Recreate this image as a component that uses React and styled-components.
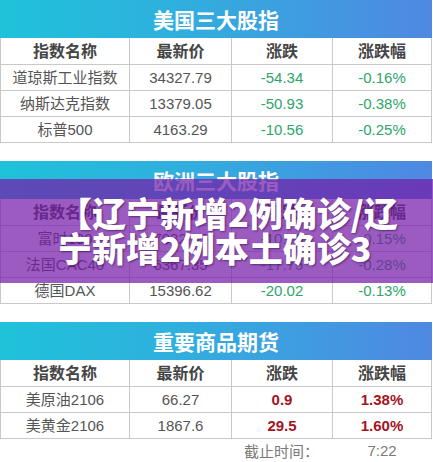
import React from 'react';
import styled, { createGlobalStyle } from "styled-components";

const GlobalStyle = createGlobalStyle`
  html, body {
    margin: 0;
    padding: 0;
    background: #fff;
  }
  body {
    font-family: "Liberation Sans", "Noto Sans CJK SC", sans-serif;
  }
`;

const tables = [
  {
    title: '美国三大股指',
    rows: [
      ['道琼斯工业指数', '34327.79', '-54.34', '-0.16%'],
      ['纳斯达克指数', '13379.05', '-50.93', '-0.38%'],
      ['标普500', '4163.29', '-10.56', '-0.25%'],
    ],
  },
  {
    title: '欧洲三大股指',
    rows: [
      ['富时100', '7032.85', '-10.76', '-0.15%'],
      ['法国CAC40', '6367.35', '-17.75', '-0.28%'],
      ['德国DAX', '15396.62', '-20.02', '-0.13%'],
    ],
  },
  {
    title: '重要商品期货',
    rows: [
      ['美原油2106', '66.27', '0.9', '1.38%'],
      ['美黄金2106', '1867.6', '29.5', '1.60%'],
    ],
  },
];

function QuoteTable({ title, rows, footer }) {
  return (
    <Card>
      <Banner>{title}</Banner>
      <Table>
        <colgroup>
          <col style={{ width: 129 }} />
          <col style={{ width: 102 }} />
          <col style={{ width: 101 }} />
          <col />
        </colgroup>
        <thead>
          <tr>
            <HeadCell>指数名称</HeadCell>
            <HeadCell>最新价</HeadCell>
            <HeadCell>涨跌</HeadCell>
            <HeadCell>涨跌幅</HeadCell>
          </tr>
        </thead>
        <tbody>
          {rows.map((r) => {
            const up = !r[2].startsWith('-');
            return (
              <tr key={r[0]}>
                <Cell>{r[0]}</Cell>
                <Cell>{r[1]}</Cell>
                <Cell $tone={up ? 'up' : 'down'}>{r[2]}</Cell>
                <Cell $tone={up ? 'up' : 'down'}>{r[3]}</Cell>
              </tr>
            );
          })}
        </tbody>
      </Table>
      {footer && (
        <Footer>
          <span />
          <span />
          <FootText>截止时间：</FootText>
          <FootText>7:22</FootText>
        </Footer>
      )}
    </Card>
  );
}

export default function App() {
  return (
    <Page>
      <GlobalStyle />
      <QuoteTable {...tables[0]} />
      <QuoteTable {...tables[1]} />
      <QuoteTable {...tables[2]} footer />
      <Overlay>
        <Line>【辽宁新增2例确诊/辽</Line>
        <Line>宁新增2例本土确诊3</Line>
      </Overlay>
    </Page>
  );
}

const Page = styled.div`
  position: relative;
  width: 433px;
  height: 462px;
  overflow: hidden;
  display: flex;
  flex-direction: column;
  gap: 18px;
  background: #fff;
`;

const Card = styled.div`
  width: 432px;
`;

const Banner = styled.div`
  height: 38px;
  display: flex;
  align-items: center;
  justify-content: center;
  background: linear-gradient(90deg, #1fc2da 0%, #2fb0de 40%, #4f88e2 100%);
  color: #fff;
  font-family: "Noto Sans CJK SC", sans-serif;
  font-weight: 700;
  font-size: 21px;
`;

const Table = styled.table`
  width: 432px;
  border-collapse: collapse;
  table-layout: fixed;
`;

const HeadCell = styled.th`
  height: 26px;
  padding: 0;
  border: 1px solid #c9c9c9;
  border-top: none;
  color: #454545;
  font-size: 16px;
  font-weight: 700;
  text-align: center;
  line-height: 25px;
`;

const Cell = styled.td`
  height: 25px;
  padding: 0;
  border: 1px solid #c9c9c9;
  text-align: center;
  font-size: 15px;
  line-height: 25px;
  color: ${(p) => (p.$tone === 'down' ? '#2ea56a' : p.$tone === 'up' ? '#a3141e' : '#555')};
  font-weight: ${(p) => (p.$tone === 'up' ? 700 : 400)};
`;

const Footer = styled.div`
  display: grid;
  grid-template-columns: 129px 102px 101px 1fr;
  height: 22px;
  align-items: center;
`;

const FootText = styled.span`
  text-align: center;
  color: #7a7a7a;
  font-size: 15px;
`;

const Overlay = styled.div`
  position: absolute;
  left: 0;
  top: 179px;
  width: 433px;
  height: 104px;
  box-sizing: border-box;
  padding: 16px 0 0 58px;
  background: rgba(116, 28, 168, 0.72);
`;

const Line = styled.div`
  color: #fff;
  font-family: "Noto Sans CJK SC", sans-serif;
  font-weight: 900;
  font-size: 34px;
  line-height: 35px;
  white-space: nowrap;
  text-shadow: 1px 1px 2px rgba(40, 0, 60, 0.55);
`;
